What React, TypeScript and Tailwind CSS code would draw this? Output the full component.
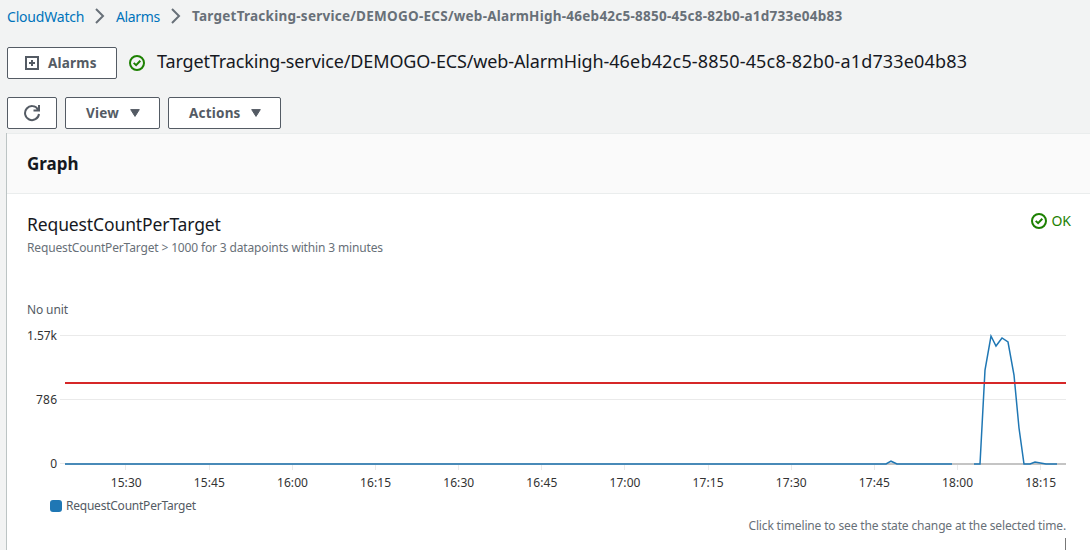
import React from "react";

const ticks = ["15:30", "15:45", "16:00", "16:15", "16:30", "16:45", "17:00", "17:15", "17:30", "17:45", "18:00", "18:15"];

function Chevron() {
  return (
    <svg width="10" height="16" viewBox="0 0 10 16" fill="none" stroke="#687078" strokeWidth="2">
      <path d="M1 1l7 7-7 7" />
    </svg>
  );
}

function OkIcon() {
  return (
    <svg className="shrink-0" width="16" height="16" viewBox="0 0 16 16" fill="none" stroke="#1d8102" strokeWidth="2">
      <circle cx="8" cy="8" r="7" />
      <path d="M4.7 7.9l2.4 2.3 4.2-4.4" />
    </svg>
  );
}

function Caret() {
  return (
    <svg width="10" height="8" viewBox="0 0 10 8" fill="#545b64" stroke="#545b64" strokeLinejoin="round">
      <path d="M.7.6h8.6L5 7.4z" />
    </svg>
  );
}

const button =
  "flex h-8 items-center rounded-[2px] border border-[#545b64] bg-white text-[13.5px] font-bold tracking-[0.2px] text-[#545b64]";

function Chart() {
  return (
    <svg className="block" width="1040" height="196" viewBox="27 300 1040 196" fontSize="12" fill="#333">
      <text x="27" y="314" fill="#545b64" textLength="41">No unit</text>
      <g stroke="#eaeaea">
        <path d="M60 335.5H1066M60 399.5H1066M60 463.5H65" />
        {ticks.map((t, i) => (
          <path key={t} d={`M${Math.round(125.4 + i * 83.17) + 0.5} 464V470`} />
        ))}
      </g>
      <g textAnchor="end">
        <text x="57" y="340" textLength="30">1.57k</text>
        <text x="57" y="404" textLength="21">786</text>
        <text x="57" y="468">0</text>
      </g>
      <g textAnchor="middle">
        {ticks.map((t, i) => (
          <text key={t} x={126.2 + i * 83.13} y="487" textLength="31">{t}</text>
        ))}
      </g>
      <path d="M65 464H1066" stroke="#c4c4c4" strokeWidth="2" />
      <g fill="none" stroke="#1f77b4" strokeWidth="1.5">
        <path d="M65 464H886L891 461.2L897 464H952" />
        <path d="M974 464H980L985 370L991 336L996 346L1002 338L1008 342L1014 375L1019 428L1024 464H1030L1035 462L1046 464H1057" />
      </g>
      <path d="M65 383H1066" stroke="#d62728" strokeWidth="2" />
    </svg>
  );
}

export default function App() {
  return (
    <div className="flex h-[550px] w-[1090px] flex-col overflow-hidden bg-[#f2f3f3] pl-[6px] font-['Noto_Sans',sans-serif] text-[#16191f]">
      <nav className="flex h-8 shrink-0 items-center pl-px text-[14px] text-[#687078]">
        <a className="w-[88px] whitespace-nowrap tracking-[-0.2px] text-[#0073bb]">CloudWatch</a>
        <Chevron />
        <a className="ml-[11px] w-[55px] whitespace-nowrap tracking-[-0.35px] text-[#0073bb]">Alarms</a>
        <Chevron />
        <span className="ml-[11px] whitespace-nowrap text-[13.5px] font-bold tracking-[0.25px]">
          TargetTracking-service/DEMOGO-ECS/web-AlarmHigh-46eb42c5-8850-45c8-82b0-a1d733e04b83
        </span>
      </nav>
      <div className="mt-[15px] flex h-8 shrink-0 items-center pl-px">
        <button className={`${button} w-[110px] pl-[17px]`}>
          <svg width="14" height="14" viewBox="0 0 14 14" fill="none" stroke="#545b64" strokeWidth="2">
            <path d="M1 1h12v12H1zM4 7h6M7 4v6" />
          </svg>
          <span className="ml-[9px]">Alarms</span>
        </button>
        <span className="ml-3 flex"><OkIcon /></span>
        <h1 className="ml-3 whitespace-nowrap pb-[5px] text-[18px] leading-6">
          <span className="tracking-[-0.13px]">TargetTracking-service/DEMOGO-ECS/web-AlarmHigh-</span>
          <span className="tracking-[0.17px]">46eb42c5-8850-45c8-82b0-a1d733e04b83</span>
        </h1>
      </div>
      <div className="mt-[18px] flex h-8 shrink-0 gap-2 pl-px">
        <button className={`${button} w-[50px] justify-center`}>
          <svg width="18" height="18" viewBox="0 0 18 18" fill="none" stroke="#545b64" strokeWidth="2">
            <path d="M16 10A7 7 0 1 1 15 5.4M16 1v5.5h-5.5" />
          </svg>
        </button>
        <button className={`${button} w-[95px] justify-between pr-[19px] pl-5`}>View<Caret /></button>
        <button className={`${button} w-[113px] justify-between pr-[19px] pl-5`}>Actions<Caret /></button>
      </div>
      <section className="mt-1 grow border-l border-[#bcc4c4] bg-white">
        <header className="flex h-[61px] items-center border-y border-[#eaeded] bg-[#fafafa] pl-5">
          <h2 className="text-[17px] font-bold">Graph</h2>
        </header>
        <div className="flex items-start justify-between pt-[17px] pr-[19px] pl-5">
          <div>
            <h3 className="text-[17.5px] leading-[27px] tracking-[-0.12px]">RequestCountPerTarget</h3>
            <p className="mt-px text-[12px] leading-[18px] tracking-[-0.15px] text-[#687078]">
              RequestCountPerTarget &gt; 1000 for 3 datapoints within 3 minutes
            </p>
          </div>
          <div className="flex items-center gap-1 text-[14px] leading-5 text-[#1d8102]"><OkIcon />OK</div>
        </div>
        <div className="mt-[43px] pl-5"><Chart /></div>
        <div className="flex h-5 items-center pl-[43px] text-[12px] tracking-[-0.23px] text-[#545b64]">
          <span className="mr-1 size-3 rounded-[3px] bg-[#1f77b4]" />
          RequestCountPerTarget
        </div>
        <p className="mr-6 text-right text-[12px] leading-5 tracking-[-0.15px] text-[#687078]">
          Click timeline to see the state change at the selected time.
        </p>
        <div className="mt-[2px] mr-6 h-4 border-r border-[#777]" />
      </section>
    </div>
  );
}
